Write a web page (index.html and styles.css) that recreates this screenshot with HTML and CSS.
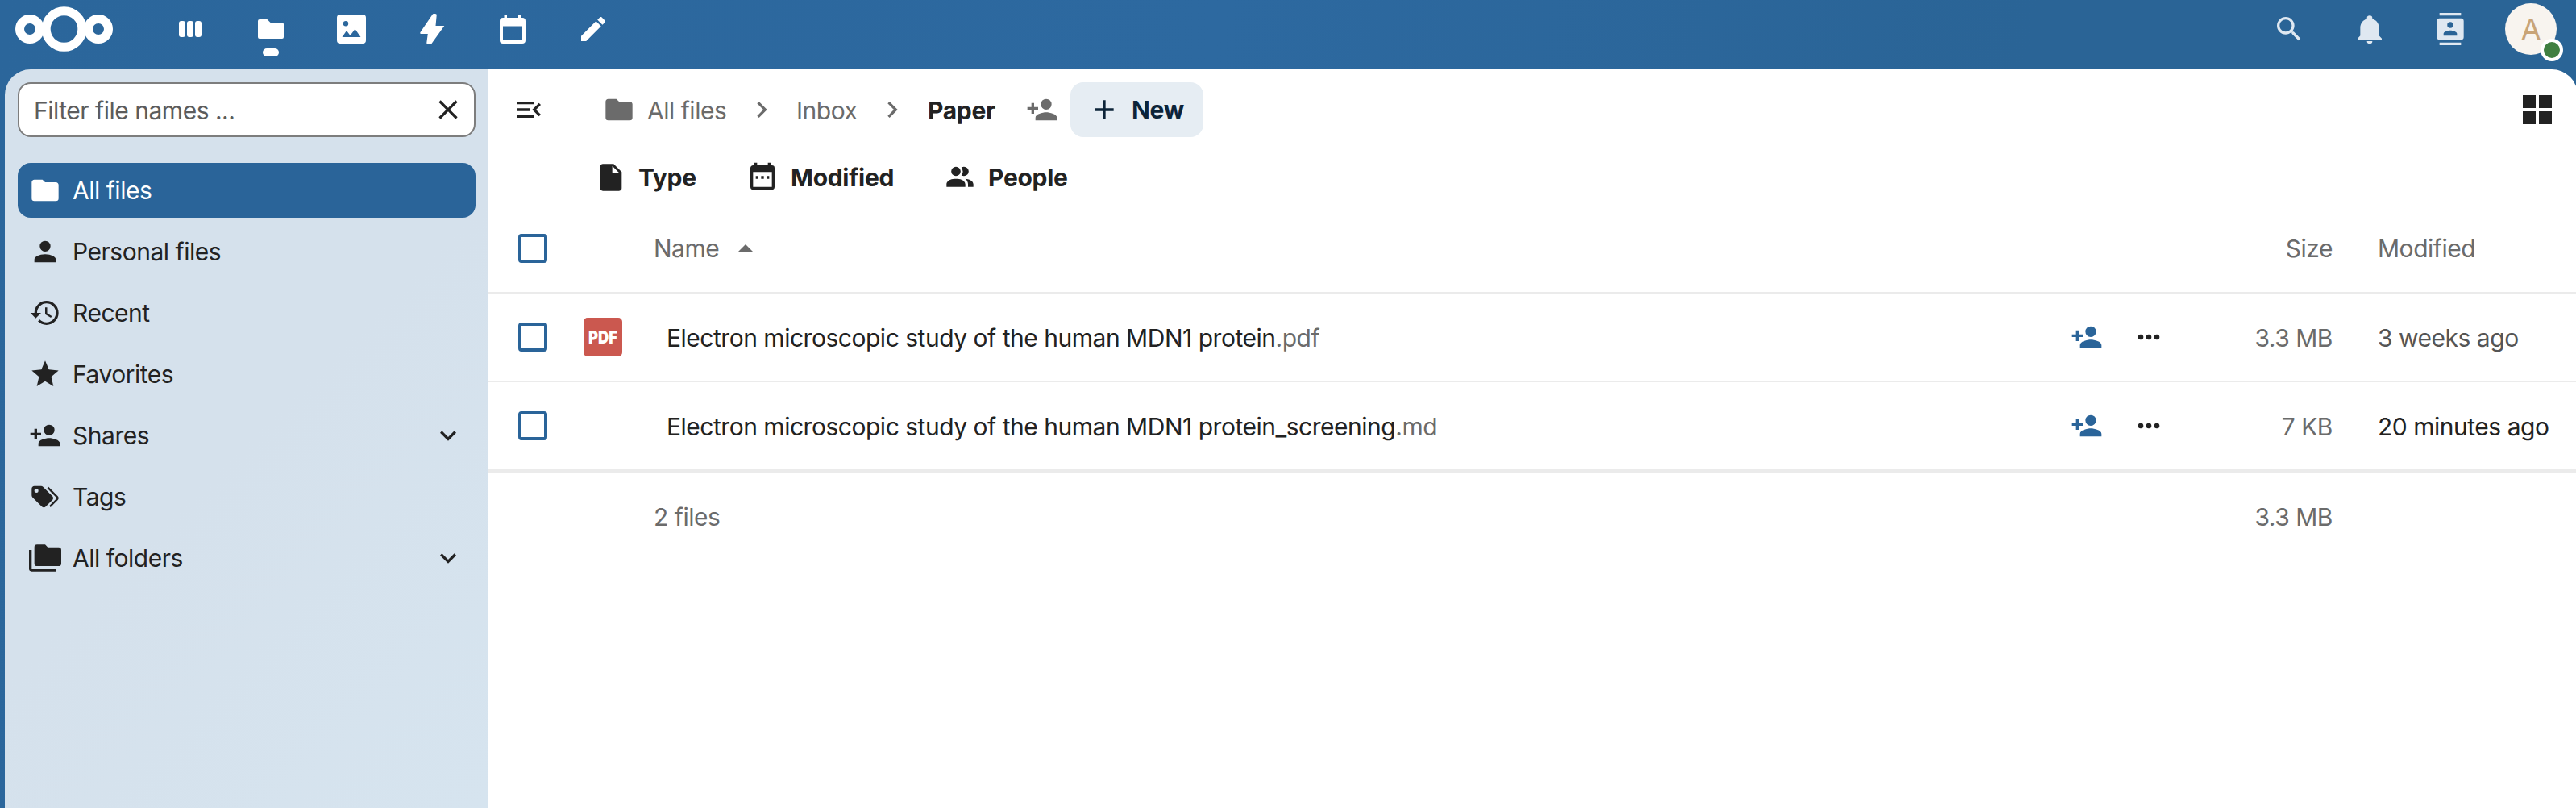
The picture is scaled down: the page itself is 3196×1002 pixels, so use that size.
FILE: index.html
```html
<!DOCTYPE html>
<html lang="en">
  <head>
    <meta charset="UTF-8" />
    <title>Paper - Files</title>
    <link rel="stylesheet" href="styles.css">
  </head>
  <body>
    <!-- Shared icons -->
    <svg class="symbols" width="0" height="0">
      <symbol id="folder" viewBox="0 0 24 24"><path d="M10,4H4C2.89,4 2,4.89 2,6V18A2,2 0 0,0 4,20H20A2,2 0 0,0 22,18V8C22,6.89 21.1,6 20,6H12L10,4Z" /></symbol>
      <symbol id="account-plus" viewBox="0 0 24 24"><path d="M15,14C12.33,14 7,15.33 7,18V20H23V18C23,15.33 17.67,14 15,14M6,10V7H4V10H1V12H4V15H6V12H9V10M15,12A4,4 0 0,0 19,8A4,4 0 0,0 15,4A4,4 0 0,0 11,8A4,4 0 0,0 15,12Z" /></symbol>
      <symbol id="chevron-right" viewBox="0 0 24 24"><path d="M8.59,16.58L13.17,12L8.59,7.41L10,6L16,12L10,18L8.59,16.58Z" /></symbol>
      <symbol id="chevron-down" viewBox="0 0 24 24"><path d="M7.41,8.58L12,13.17L16.59,8.58L18,10L12,16L6,10L7.41,8.58Z" /></symbol>
      <symbol id="dots" viewBox="0 0 24 24"><path d="M16,12A2,2 0 0,1 18,10A2,2 0 0,1 20,12A2,2 0 0,1 18,14A2,2 0 0,1 16,12M10,12A2,2 0 0,1 12,10A2,2 0 0,1 14,12A2,2 0 0,1 12,14A2,2 0 0,1 10,12M4,12A2,2 0 0,1 6,10A2,2 0 0,1 8,12A2,2 0 0,1 6,14A2,2 0 0,1 4,12Z" /></symbol>
    </svg>

    <header class="header">
      <svg class="logo" viewBox="0 0 122 56">
        <g fill="none" stroke="#fff">
          <circle cx="18" cy="28" r="12.5" stroke-width="11" />
          <circle cx="60.5" cy="28" r="22.3" stroke-width="11" />
          <circle cx="103" cy="28" r="12.5" stroke-width="11" />
        </g>
      </svg>
      <nav class="apps">
        <a class="app">
          <svg class="app-icon" viewBox="0 0 40 40">
            <rect x="6" y="10" width="8" height="20" rx="3" />
            <rect x="16" y="10" width="8" height="20" rx="3" />
            <rect x="26" y="10" width="8" height="20" rx="3" />
          </svg>
        </a>
        <a class="app active">
          <svg class="app-icon" viewBox="0 0 40 40"><path d="M6,8H15.500L19.500,12H34Q36,12 36,14V30Q36,32 34,32H6Q4,32 4,30V10Q4,8 6,8Z" /></svg>
        </a>
        <a class="app">
          <svg class="app-icon" viewBox="0 0 40 40"><path fill-rule="evenodd" d="M6,2H34Q38,2 38,6V34Q38,38 34,38H6Q2,38 2,34V6Q2,2 6,2ZM13,10A3.200,3.200 0 0,0 13,16.400A3.200,3.200 0 0,0 13,10ZM8.500,30H31.500L24.500,20L18.500,28L14,22Z" /></svg>
        </a>
        <a class="app">
          <svg class="app-icon" viewBox="0 0 40 40"><path d="M22,1H24Q26,1 25.700,3L24.500,16H35.300L19.500,38Q18.500,39.500 17,39H15Q13,39 13.300,37L14.800,26H6Q4.500,25.700 5.500,24L20.500,2Q21,1 22,1Z" /></svg>
        </a>
        <a class="app">
          <svg class="app-icon" viewBox="0 0 40 40"><path fill-rule="evenodd" d="M9.500,2H13V6H27V2H30.500V6H32Q36,6 36,10V34Q36,38 32,38H8Q4,38 4,34V10Q4,6 8,6H9.500ZM8,16.500V34H32V16.500Z" /></svg>
        </a>
        <a class="app">
          <svg class="app-icon" viewBox="0 0 24 24"><path d="M20.710,7.040C21.100,6.650 21.100,6 20.710,5.630L18.370,3.290C18,2.900 17.350,2.900 16.960,3.290L15.120,5.120L18.870,8.870M3,17.250V21H6.750L17.810,9.930L14.060,6.180L3,17.250Z" /></svg>
        </a>
      </nav>
      <div class="tools">
        <svg class="tool" viewBox="0 0 24 24"><path d="M9.500,3A6.500,6.500 0 0,1 16,9.500C16,11.110 15.410,12.590 14.440,13.730L14.710,14H15.500L20.500,19L19,20.500L14,15.500V14.710L13.730,14.440C12.590,15.410 11.110,16 9.500,16A6.500,6.500 0 0,1 3,9.500A6.500,6.500 0 0,1 9.500,3M9.500,5C7,5 5,7 5,9.500C5,12 7,14 9.500,14C12,14 14,12 14,9.500C14,7 12,5 9.500,5Z" /></svg>
        <svg class="tool" viewBox="0 0 24 24"><path d="M21,19V20H3V19L5,17V11C5,7.900 7.030,5.170 10,4.290C10,4.190 10,4.100 10,4A2,2 0 0,1 12,2A2,2 0 0,1 14,4C14,4.100 14,4.190 14,4.290C16.970,5.170 19,7.900 19,11V17L21,19M14,21A2,2 0 0,1 12,23A2,2 0 0,1 10,21" /></svg>
        <svg class="tool" viewBox="0 0 24 24"><path d="M20,0H4V2H20V0M4,24H20V22H4V24M20,4H4A2,2 0 0,0 2,6V18A2,2 0 0,0 4,20H20A2,2 0 0,0 22,18V6A2,2 0 0,0 20,4M12,6.750A2.250,2.250 0 0,1 14.250,9A2.250,2.250 0 0,1 12,11.250A2.250,2.250 0 0,1 9.750,9A2.250,2.250 0 0,1 12,6.750M17,17H7V15.500C7,13.830 10.330,13 12,13C13.670,13 17,13.830 17,15.500V17Z" /></svg>
        <div class="avatar">A<span class="status"></span></div>
      </div>
    </header>

    <div class="content">
      <aside class="sidebar">
        <div class="search">
          <span>Filter file names ...</span>
          <svg class="icon" viewBox="0 0 24 24"><path d="M19,6.410L17.590,5L12,10.590L6.410,5L5,6.410L10.590,12L5,17.590L6.410,19L12,13.410L17.590,19L19,17.590L13.410,12L19,6.410Z" /></svg>
        </div>
        <ul class="nav">
          <li class="selected">
            <svg class="icon"><use href="#folder" /></svg>
            <span>All files</span>
          </li>
          <li>
            <svg class="icon" viewBox="0 0 24 24"><path d="M12,4A4,4 0 0,1 16,8A4,4 0 0,1 12,12A4,4 0 0,1 8,8A4,4 0 0,1 12,4M12,14C16.420,14 20,15.790 20,18V20H4V18C4,15.790 7.580,14 12,14Z" /></svg>
            <span>Personal files</span>
          </li>
          <li>
            <svg class="icon" viewBox="0 0 24 24"><path d="M13.500,8H12V13L16.280,15.540L17,14.330L13.500,12.250V8M13,3A9,9 0 0,0 4,12H1L4.960,16.030L9,12H6A7,7 0 0,1 13,5A7,7 0 0,1 20,12A7,7 0 0,1 13,19C11.070,19 9.320,18.210 8.060,16.940L6.640,18.360C8.270,20 10.500,21 13,21A9,9 0 0,0 22,12A9,9 0 0,0 13,3" /></svg>
            <span>Recent</span>
          </li>
          <li>
            <svg class="icon" viewBox="0 0 24 24"><path d="M12,17.270L18.180,21L16.540,13.970L22,9.240L14.810,8.620L12,2L9.190,8.620L2,9.240L7.450,13.970L5.820,21L12,17.270Z" /></svg>
            <span>Favorites</span>
          </li>
          <li>
            <svg class="icon"><use href="#account-plus" /></svg>
            <span>Shares</span>
            <svg class="icon"><use href="#chevron-down" /></svg>
          </li>
          <li>
            <svg class="icon" viewBox="0 0 24 24"><path d="M5.500,9A1.500,1.500 0 0,0 7,7.500A1.500,1.500 0 0,0 5.500,6A1.500,1.500 0 0,0 4,7.500A1.500,1.500 0 0,0 5.500,9M17.410,11.580C17.770,11.940 18,12.440 18,13C18,13.550 17.780,14.050 17.410,14.410L12.410,19.410C12.050,19.770 11.550,20 11,20C10.450,20 9.950,19.780 9.580,19.410L2.590,12.420C2.220,12.050 2,11.550 2,11V6C2,4.890 2.890,4 4,4H9C9.550,4 10.050,4.220 10.410,4.580L17.410,11.580M13.540,5.710L14.540,4.710L21.410,11.580C21.780,11.940 22,12.450 22,13C22,13.550 21.780,14.050 21.420,14.410L16.040,19.790L15.040,18.790L20.750,13L13.540,5.710Z" /></svg>
            <span>Tags</span>
          </li>
          <li>
            <svg class="icon" viewBox="0 0 24 24"><path d="M22,4H14L12,2H6A2,2 0 0,0 4,4V16A2,2 0 0,0 6,18H22A2,2 0 0,0 24,16V6A2,2 0 0,0 22,4M2,6H0V11H0V20A2,2 0 0,0 2,22H20V20H2V6Z" /></svg>
            <span>All folders</span>
            <svg class="icon"><use href="#chevron-down" /></svg>
          </li>
        </ul>
      </aside>

      <main class="files">
        <div class="toolbar">
          <svg class="icon" viewBox="0 0 24 24"><path d="M21,15.610L19.590,17L14.580,12L19.590,7L21,8.390L17.440,12L21,15.610M3,6H16V8H3V6M3,13V11H13V13H3M3,18V16H16V18H3Z" /></svg>
          <div class="breadcrumb">
            <svg class="icon"><use href="#folder" /></svg>
            <span>All files</span>
            <svg class="icon"><use href="#chevron-right" /></svg>
            <span>Inbox</span>
            <svg class="icon"><use href="#chevron-right" /></svg>
            <b>Paper</b>
            <svg class="icon"><use href="#account-plus" /></svg>
          </div>
          <button class="new-button">
            <svg class="icon" viewBox="0 0 24 24"><path d="M19,13H13V19H11V13H5V11H11V5H13V11H19V13Z" /></svg>
            New
          </button>
          <svg class="grid-toggle" viewBox="0 0 36 36"><path d="M0,0H16V16H0ZM20,0H36V16H20ZM0,20H16V36H0ZM20,20H36V36H20Z" /></svg>
        </div>

        <div class="filters">
          <svg class="icon" viewBox="0 0 24 24"><path d="M13,9V3.500L18.500,9M6,2C4.890,2 4,2.890 4,4V20A2,2 0 0,0 6,22H18A2,2 0 0,0 20,20V8L14,2H6Z" /></svg>
          <span>Type</span>
          <svg class="icon" viewBox="0 0 24 24"><path d="M9,11H7V13H9V11M13,11H11V13H13V11M17,11H15V13H17V11M19,3H18V1H16V3H8V1H6V3H5C3.890,3 3,3.900 3,5V19A2,2 0 0,0 5,21H19A2,2 0 0,0 21,19V5A2,2 0 0,0 19,3M19,19H5V8H19V19Z" /></svg>
          <span>Modified</span>
          <svg class="icon" viewBox="0 0 24 24"><path d="M16,17V19H2V17S2,13 9,13 16,17 16,17M12.500,7.500A3.500,3.500 0 1,0 9,11A3.500,3.500 0 0,0 12.500,7.500M15.940,13A5.320,5.320 0 0,1 18,17V19H22V17S22,13.370 15.940,13M15,4A3.390,3.390 0 0,0 13.070,4.590A5,5 0 0,1 13.070,10.410A3.390,3.390 0 0,0 15,11A3.500,3.500 0 0,0 15,4Z" /></svg>
          <span>People</span>
        </div>

        <div class="row row-head">
          <span class="checkbox"></span>
          <span></span>
          <span class="col-name">Name <i class="sort"></i></span>
          <span class="actions"></span>
          <span class="size">Size</span>
          <span class="mtime">Modified</span>
        </div>
        <div class="row">
          <span class="checkbox"></span>
          <svg class="pdf" viewBox="0 0 48 48">
            <rect width="48" height="48" rx="5" />
            <text x="6" y="32" textLength="36" lengthAdjust="spacingAndGlyphs">PDF</text>
          </svg>
          <span class="name">Electron microscopic study of the human MDN1 protein<span class="ext">.pdf</span></span>
          <span class="actions">
            <svg class="icon share"><use href="#account-plus" /></svg>
            <svg class="icon"><use href="#dots" /></svg>
          </span>
          <span class="size">3.3 MB</span>
          <span class="mtime older">3 weeks ago</span>
        </div>
        <div class="row">
          <span class="checkbox"></span>
          <span></span>
          <span class="name">Electron microscopic study of the human MDN1 protein_screening<span class="ext">.md</span></span>
          <span class="actions">
            <svg class="icon share"><use href="#account-plus" /></svg>
            <svg class="icon"><use href="#dots" /></svg>
          </span>
          <span class="size">7 KB</span>
          <span class="mtime">20 minutes ago</span>
        </div>
        <div class="row row-foot">
          <span></span>
          <span></span>
          <span class="col-name">2 files</span>
          <span class="actions"></span>
          <span class="size">3.3 MB</span>
          <span class="mtime"></span>
        </div>
      </main>
    </div>
  </body>
</html>
```

FILE: styles.css
```css
* {
  box-sizing: border-box;
}

body {
  margin: 0;
  height: 1002px;
  overflow: hidden;
  display: flex;
  flex-direction: column;
  font-family: Inter, "Liberation Sans", sans-serif;
  font-size: 30px;
  line-height: 44px;
  letter-spacing: -0.48px;
  color: #222;
  background: linear-gradient(100deg, #2b669b, #2d69a0 45%, #2a6496 75%);
}

svg {
  fill: currentColor;
  flex: none;
}

.symbols {
  position: absolute;
}

.icon {
  width: 40px;
  height: 40px;
  display: block;
}

/* header */
.header {
  height: 86px;
  flex: none;
  display: flex;
  align-items: center;
  padding: 0 24px 14px 19px;
  color: #fff;
}

.logo {
  width: 122px;
  height: 56px;
}

.apps {
  display: flex;
  flex: 1;
  margin-left: 45px;
}

.app {
  width: 100px;
  height: 72px;
  display: flex;
  align-items: center;
  justify-content: center;
}

.app-icon {
  width: 40px;
  height: 40px;
}

.app.active {
  position: relative;
}

.app.active::after {
  content: "";
  position: absolute;
  left: 40px;
  bottom: 2px;
  width: 20px;
  height: 10px;
  border-radius: 5px;
  background: #fff;
}

.tools {
  display: flex;
  align-items: center;
  gap: 60px;
  color: #dfe8f1;
}

.tool {
  width: 40px;
  height: 40px;
}

.avatar {
  position: relative;
  width: 64px;
  height: 64px;
  margin-left: -12px;
  border-radius: 50%;
  background: #f8f4ef;
  color: #c9a477;
  font-size: 36px;
  line-height: 65px;
  text-align: center;
}

.status {
  position: absolute;
  right: -8px;
  bottom: -8px;
  width: 28px;
  height: 28px;
  border: 4px solid #fff;
  border-radius: 50%;
  background: #3f7f41;
}

.content {
  flex: 1;
  display: flex;
  margin-left: 6px;
  margin-right: -2px;
  border-radius: 32px 32px 0 0;
  overflow: hidden;
}

/* sidebar */
.sidebar {
  width: 600px;
  padding: 16px;
  background: linear-gradient(135deg, #d5e1ec 50%, #d6e4ef);
}

.search {
  height: 68px;
  display: flex;
  align-items: center;
  justify-content: space-between;
  padding: 2px 12px 0 18px;
  border: 2px solid #7d7d7d;
  border-radius: 16px;
  background: #fff;
}

.search .icon {
  margin-top: -2px;
}

.search span {
  color: #5c5c5c;
}

.nav {
  list-style: none;
  margin: 32px 0 0;
  padding: 0;
  display: flex;
  flex-direction: column;
  gap: 8px;
}

.nav li {
  height: 68px;
  display: flex;
  align-items: center;
  gap: 14px;
  padding: 0 14px;
  border-radius: 16px;
}

.nav li span {
  flex: 1;
}

.nav .selected {
  background: #2a6499;
  color: #fff;
}

/* file list */
.files {
  flex: 1;
  background: #fff;
}

.toolbar {
  display: flex;
  align-items: center;
  height: 68px;
  margin-top: 16px;
  padding: 0 32px 0 30px;
}

.breadcrumb {
  display: grid;
  grid-template-columns: 55px 122px 63px 99px 64px 122px 55px;
  align-items: center;
  margin-left: 72px;
  color: #6b6b6b;
}

.breadcrumb span,
.breadcrumb b {
  padding-top: 2px;
}

.breadcrumb b {
  color: #222;
  letter-spacing: -0.3px;
}

.new-button {
  width: 165px;
  height: 68px;
  display: flex;
  align-items: center;
  gap: 14px;
  padding: 0 0 0 22px;
  border: none;
  border-radius: 16px;
  background: #e6edf3;
  color: #0d2438;
  font: inherit;
  font-weight: bold;
  letter-spacing: -0.3px;
}

.grid-toggle {
  width: 36px;
  height: 36px;
  margin-left: auto;
}

.filters {
  display: grid;
  grid-template-columns: 54px 134px 55px 190px 55px 120px;
  align-items: center;
  height: 68px;
  margin-top: 16px;
  margin-left: 132px;
  font-weight: bold;
  letter-spacing: -0.3px;
}

.row {
  display: grid;
  grid-template-columns: 81px 103px 1fr 160px 164px 304px;
  align-items: center;
  height: 110px;
  padding-left: 37px;
  border-bottom: 2px solid #ebebeb;
}

.row-head,
.row-foot {
  color: #6b6b6b;
}

.row-foot {
  border-top: 2px solid #ebebeb;
  border-bottom: none;
  height: 112px;
}

.checkbox {
  width: 36px;
  height: 36px;
  border: 4px solid #2a6499;
  border-radius: 4px;
}

.pdf {
  width: 48px;
  height: 48px;
  fill: #cb584f;
  overflow: visible;
}

.pdf text {
  fill: #fff;
  font-size: 22px;
  font-weight: 900;
  line-height: 1;
  letter-spacing: 0;
}

.col-name {
  display: flex;
  align-items: center;
  margin-left: -16px;
}

.sort {
  margin-left: 23px;
  border: 10px solid transparent;
  border-top: none;
  border-bottom-color: #6b6b6b;
}

.name,
.size,
.mtime {
  padding-top: 1px;
}

.row-head .size,
.row-head .mtime,
.row-foot .size {
  padding-top: 0;
}

.ext,
.size {
  color: #6b6b6b;
}

.actions {
  display: flex;
  gap: 37px;
  margin-left: -1px;
}

.share {
  color: #2a6499;
}

.size {
  text-align: right;
}

.mtime {
  padding-left: 56px;
  white-space: nowrap;
}

.older {
  color: #555;
}
```
